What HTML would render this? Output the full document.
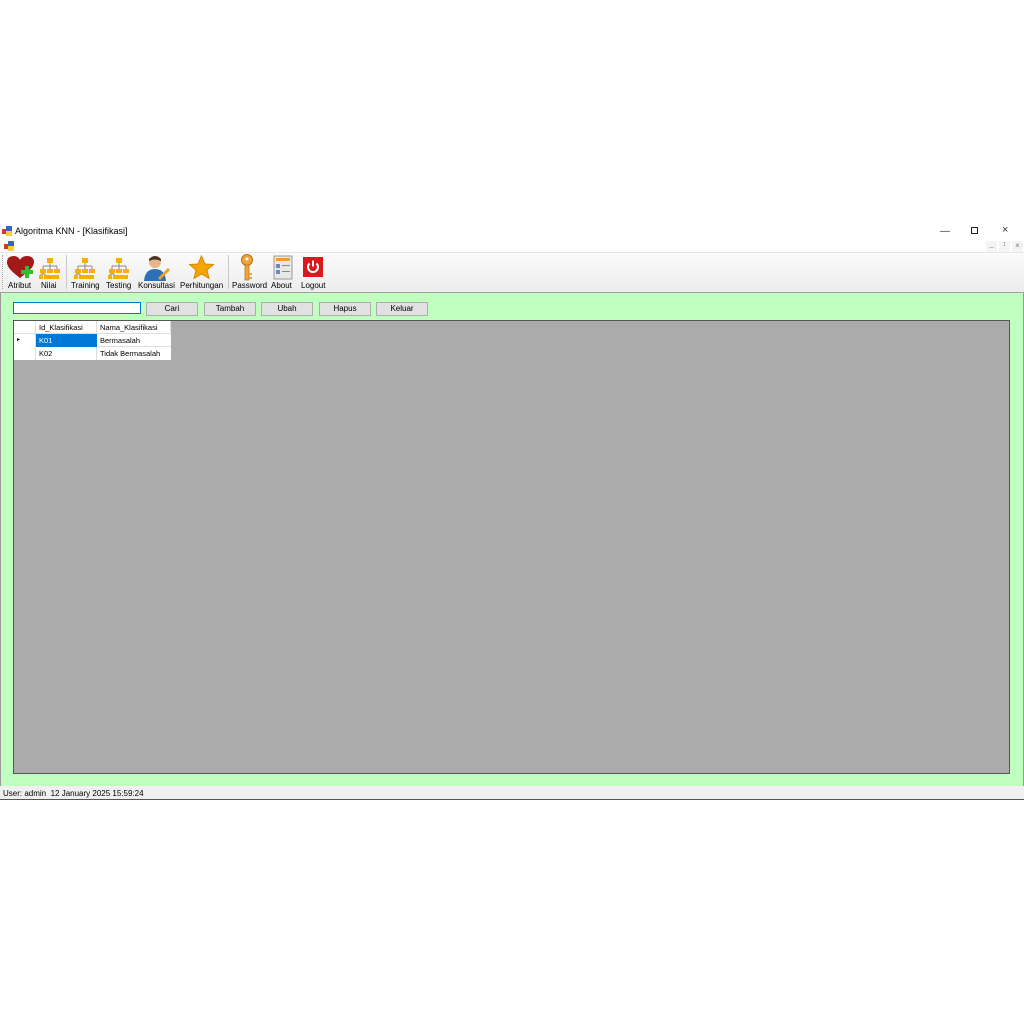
<!DOCTYPE html>
<html><head><meta charset="utf-8">
<style>
*{margin:0;padding:0;box-sizing:border-box}
body{width:1024px;height:1024px;background:#fff;position:relative;font-family:"Liberation Sans",sans-serif;font-size:8px;color:#000;overflow:hidden}
.a{position:absolute}
.btn{position:absolute;top:302px;height:14px;width:52px;background:#e1e1e1;border:1px solid #adadad;text-align:center;line-height:12px;font-size:8px}
.lbl{position:absolute;top:281px;font-size:8px;white-space:nowrap}
.cell{position:absolute;height:13px;line-height:13px;font-size:7.5px;padding-left:3px;white-space:nowrap;overflow:hidden}
</style></head><body>
<!-- title bar -->
<div class="a" style="left:0;top:222px;width:1024px;height:18px;background:#fff"></div>
<svg class="a" style="left:2px;top:226px" width="10" height="10"><rect x="0" y="3" width="5" height="5" fill="#d33"/><rect x="4" y="0" width="6" height="5" fill="#36c"/><rect x="4" y="5" width="6" height="5" fill="#fc3"/></svg>
<div class="a" style="left:15px;top:226px;font-size:9px">Algoritma KNN - [Klasifikasi]</div>
<div class="a" style="left:940px;top:226px;font-size:10px;color:#333">&#8212;</div>
<div class="a" style="left:971px;top:227px;width:7px;height:7px;border:1px solid #222"></div>
<div class="a" style="left:1002px;top:224px;font-size:11px;color:#333">&#215;</div>
<!-- menu strip -->
<svg class="a" style="left:4px;top:241px" width="10" height="10"><rect x="0" y="3" width="5" height="5" fill="#d33"/><rect x="4" y="0" width="6" height="5" fill="#36c"/><rect x="4" y="5" width="6" height="5" fill="#fc3"/></svg>
<div class="a" style="left:986px;top:241px;width:11px;height:11px;background:#f4f4f4;font-size:7px;color:#777;text-align:center">_</div>
<div class="a" style="left:999px;top:241px;width:11px;height:11px;background:#f4f4f4;font-size:7px;color:#777;text-align:center">&#8597;</div>
<div class="a" style="left:1012px;top:241px;width:11px;height:11px;background:#f4f4f4;font-size:8px;color:#777;text-align:center">&#215;</div>
<!-- toolbar -->
<div class="a" style="left:0;top:252px;width:1024px;height:41px;background:linear-gradient(#fbfbfb,#ededed);border-top:1px solid #e5e5e5;border-bottom:1px solid #a0a0a0"></div>
<div class="a" style="left:2px;top:255px;width:1px;height:34px;border-left:1px dotted #aaa"></div>
<div class="a" style="left:66px;top:255px;width:1px;height:34px;background:#c8c8c8"></div>
<div class="a" style="left:228px;top:255px;width:1px;height:34px;background:#c8c8c8"></div>
<!-- heart -->
<svg class="a" style="left:7px;top:256px" width="28" height="24"><path d="M13 22 C4 15 0 11 0 6 C0 2 3 0 7 0 C10 0 12 2 13 4 C14 2 16 0 20 0 C24 0 27 2 27 6 C27 11 22 15 13 22Z" fill="#a51818"/><rect x="18" y="10" width="4" height="12" fill="#3b3"/><rect x="14" y="14" width="12" height="4" fill="#3b3"/></svg>
<!-- org icons -->
<svg width="0" height="0" style="position:absolute"><defs><g id="org"><rect x="8" y="0" width="6" height="5" fill="#f5b000"/><path d="M11 5v3M4 8h14M4 8v3M11 8v3M18 8v3M2 16v2M6 16v2M4 14v2M2 16h4" stroke="#888" stroke-width="1" fill="none"/><rect x="1" y="11" width="6" height="4" fill="#f5b000"/><rect x="8" y="11" width="6" height="4" fill="#f5b000"/><rect x="15" y="11" width="6" height="4" fill="#f5b000"/><rect x="0" y="17" width="4" height="4" fill="#f5b000"/><rect x="5" y="17" width="4" height="4" fill="#f5b000"/><rect x="9" y="17" width="4" height="4" fill="#f5b000"/><rect x="16" y="17" width="4" height="4" fill="#f5b000"/><rect x="12" y="17" width="4" height="4" fill="#f5b000"/></g></defs></svg>
<svg class="a" style="left:39px;top:258px" width="22" height="22"><use href="#org"/></svg>
<svg class="a" style="left:74px;top:258px" width="22" height="22"><use href="#org"/></svg>
<svg class="a" style="left:108px;top:258px" width="22" height="22"><use href="#org"/></svg>
<!-- person -->
<svg class="a" style="left:144px;top:255px" width="26" height="26"><circle cx="11" cy="7" r="6" fill="#e8b48a"/><path d="M5 4 Q11 -2 17 4 L17 6 Q11 3 5 6Z" fill="#4a3020"/><path d="M0 26 Q1 14 11 14 Q21 14 22 26Z" fill="#2d6fb8"/><path d="M14 23 L24 13 L26 15 L16 25Z" fill="#f0a020"/></svg>
<!-- star -->
<svg class="a" style="left:189px;top:255px" width="25" height="25"><path d="M12.5 1 L16 9 L24.5 9.5 L18 15 L20 23.5 L12.5 19 L5 23.5 L7 15 L0.5 9.5 L9 9Z" fill="#f5a500" stroke="#d88a00"/></svg>
<!-- key -->
<svg class="a" style="left:239px;top:254px" width="16" height="28"><circle cx="8" cy="6" r="5.5" fill="#f2a33a" stroke="#b86e10"/><circle cx="8" cy="5" r="1.5" fill="#fff"/><rect x="6" y="11" width="4" height="15" fill="#f2a33a" stroke="#b86e10" stroke-width=".7"/><rect x="10" y="19" width="3" height="2" fill="#f2a33a"/><rect x="10" y="23" width="3" height="2" fill="#f2a33a"/></svg>
<!-- about -->
<svg class="a" style="left:273px;top:255px" width="20" height="25"><rect x="1" y="1" width="18" height="23" fill="#e8e8e8" stroke="#999"/><rect x="3" y="3" width="14" height="3" fill="#e8a030"/><rect x="3" y="9" width="4" height="4" fill="#6a8ab8"/><rect x="9" y="10" width="8" height="1" fill="#888"/><rect x="3" y="15" width="4" height="4" fill="#6a8ab8"/><rect x="9" y="16" width="8" height="1" fill="#888"/></svg>
<!-- logout -->
<svg class="a" style="left:303px;top:257px" width="20" height="20"><rect width="20" height="20" fill="#d9191e"/><path d="M6.5 6.5 A5 5 0 1 0 13.5 6.5" stroke="#fff" stroke-width="2" fill="none"/><rect x="9" y="3.5" width="2" height="6" fill="#fff"/></svg>
<div class="lbl" style="left:8px">Atribut</div>
<div class="lbl" style="left:41px">Nilai</div>
<div class="lbl" style="left:71px">Training</div>
<div class="lbl" style="left:106px">Testing</div>
<div class="lbl" style="left:138px">Konsultasi</div>
<div class="lbl" style="left:180px">Perhitungan</div>
<div class="lbl" style="left:232px">Password</div>
<div class="lbl" style="left:271px">About</div>
<div class="lbl" style="left:301px">Logout</div>
<!-- green client -->
<div class="a" style="left:0;top:293px;width:1024px;height:493px;background:#c0ffc0;border-left:1px solid #999;border-right:1px solid #999"></div>
<div class="a" style="left:13px;top:302px;width:128px;height:12px;background:#fff;border:1px solid #0078d7"></div>
<div class="btn" style="left:146px">Cari</div>
<div class="btn" style="left:204px">Tambah</div>
<div class="btn" style="left:261px">Ubah</div>
<div class="btn" style="left:319px">Hapus</div>
<div class="btn" style="left:376px">Keluar</div>
<!-- grid -->
<div class="a" style="left:13px;top:320px;width:997px;height:454px;background:#ababab;border:1px solid #555"></div>
<div class="a" style="left:14px;top:321px;width:157px;height:39px;background:#fff"></div>
<div class="cell" style="left:36px;top:321px;width:61px;border-right:1px solid #ddd;border-bottom:1px solid #ddd;padding-left:3px">Id_Klasifikasi</div>
<div class="cell" style="left:97px;top:321px;width:74px;border-bottom:1px solid #ddd;border-right:1px solid #ddd">Nama_Klasifikasi</div>
<div class="cell" style="left:14px;top:321px;width:22px;border-right:1px solid #ddd;border-bottom:1px solid #ddd"></div>
<div class="cell" style="left:14px;top:334px;width:22px;border-right:1px solid #ddd;font-size:6px">&#9656;</div>
<div class="cell" style="left:36px;top:334px;width:61px;background:#0078d7;color:#fff">K01</div>
<div class="cell" style="left:97px;top:334px;width:74px;border-bottom:1px solid #ddd">Bermasalah</div>
<div class="cell" style="left:14px;top:347px;width:22px;border-right:1px solid #ddd"></div>
<div class="cell" style="left:36px;top:347px;width:61px;border-right:1px solid #ddd">K02</div>
<div class="cell" style="left:97px;top:347px;width:74px">Tidak Bermasalah</div>
<!-- status -->
<div class="a" style="left:0;top:786px;width:1024px;height:14px;background:#f0f0f0;border-bottom:1px solid #555"></div>
<div class="a" style="left:3px;top:789px;font-size:8px">User: admin&nbsp;&nbsp;12 January 2025 15:59:24</div>
</body></html>
